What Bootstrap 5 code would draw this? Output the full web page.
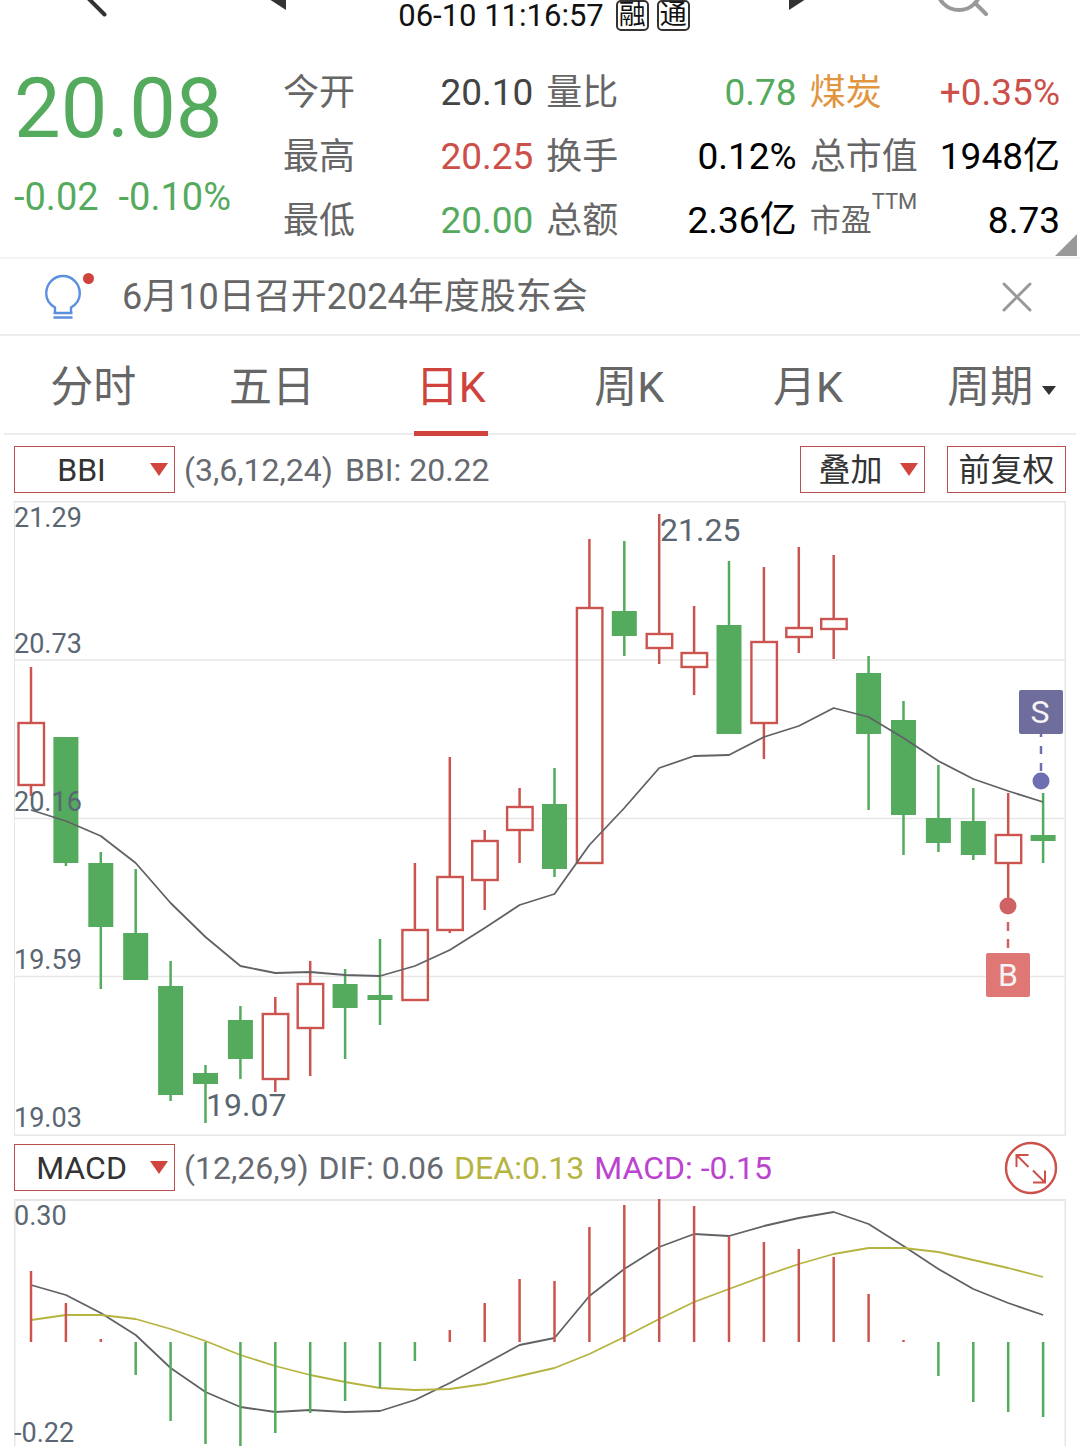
<!DOCTYPE html>
<html lang="zh-CN">
<head>
<meta charset="utf-8">
<meta name="viewport" content="width=device-width, initial-scale=1">
<title>日K</title>
<link href="https://cdn.jsdelivr.net/npm/bootstrap@5.3.0/dist/css/bootstrap.min.css" rel="stylesheet">
<style>
  :root { --up: #cc4f4a; --down: #54aa5d; --ink: #333; --label: #666; --rule: #ececec; --axis: #5a6672; }
  body { font-family: Roboto, "Noto Sans CJK SC", sans-serif; background: #fff; color: #000; overflow-x: hidden; }
  svg { display: block; }
  .c-up { color: var(--up); }
  .c-down { color: var(--down); }
  .c-ink { color: #444; }
  .c-label { color: var(--label); }
  .c-sector { color: #e2953f; }
  .c-dea { color: #b5b440; }
  .c-macd { color: #bb44cf; }
  .icon-btn { border: 0; background: none; padding: 0; }

  .topbar { height: 61px; }
  .topbar-side { flex: 1 1 0; height: 32px; }
  .topbar-start { padding: 0 104px 0 86px; }
  .topbar-end { padding: 0 92px 0 98px; }
  .stamp { font-size: 31px; line-height: 31px; color: #111; padding-left: 8px; }
  .flag { width: 33px; height: 31px; font-size: 27px; line-height: 27px; border: 2px solid #333; border-radius: 5px; text-align: center; }

  .quote { display: grid; grid-template-columns: 256px repeat(3, 1fr); column-gap: 13px; padding: 0 20px 4px 14px; border-bottom: 2px solid #f4f4f4; position: relative; }
  .price { font-size: 83px; line-height: 96px; }
  .delta { font-size: 38px; line-height: 80px; gap: 20px; }
  .stat-row { line-height: 64px; font-size: 37px; white-space: nowrap; }
  .stat-row dt { font-size: 36px; font-weight: 400; }
  .stat-row dd { margin: 0; }
  .stat-row .pe { font-size: 31px; }
  .pe sup { font-size: 22px; top: -22px; line-height: 0; vertical-align: baseline; }
  .corner { position: absolute; right: 3px; bottom: 1px; }

  .notice { height: 77px; padding: 0 48px 0 44px; border-bottom: 2px solid var(--rule); }
  .notice-text { font-size: 36px; color: var(--label); text-decoration: none; margin-left: 27px; }

  .period-tabs { height: 99px; margin: 0 4px; border-bottom: 2px solid var(--rule); }
  .period-tabs .nav-link { position: relative; width: 100%; height: 99px; padding: 0; border: 0; background: none; font-size: 43px; line-height: 102px; color: var(--label); white-space: nowrap; }
  .period-tabs .nav-link.active { color: #cf433c; }
  .period-tabs .nav-link.active::after { content: ""; position: absolute; left: 50%; bottom: -1px; width: 74px; height: 5px; margin-left: -37px; background: #cf433c; }
  .period-tabs .has-more { padding-left: 30px; }
  .has-more svg { display: inline-block; margin-left: 9px; vertical-align: middle; }

  .tools { height: 47px; font-size: 32px; line-height: 48px; margin: 8px 14px 0; white-space: nowrap; }
  .tools-main { margin-top: 11px; }
  .values { gap: 12px; margin-left: 9px; color: #666a70; }
  .values-tight { gap: 10px; }
  .boxed { height: 47px; border: 1px solid #b9504d; background: #fff; color: var(--ink); font-size: 32px; line-height: 42px; padding: 0; }
  .pick { position: relative; }
  .pick select { display: block; appearance: none; width: 100%; text-align: center; text-align-last: center; border-radius: 0; }
  .pick::after { content: ""; position: absolute; right: 7px; top: 17px; border: 9px solid transparent; border-top: 13px solid #d2453e; border-bottom: 0; pointer-events: none; }
  .pick-wide { width: 161px; }
  .pick-wide select { padding-right: 26px; }
  .pick-narrow { width: 125px; }
  .pick-narrow select { padding-right: 24px; }
  .adjust { width: 119px; margin-left: 22px; }
  .plot { margin: 8px 14px 0; }
  .plot svg { width: 100%; height: auto; }
  .plot text { font-family: Roboto, sans-serif; fill: var(--axis); font-size: 27px; }
  .plot .peak { font-size: 32px; }
  .plot .tag { font-size: 32px; fill: #f5f3f5; text-anchor: middle; }
</style>
<script src="https://cdn.jsdelivr.net/npm/bootstrap@5.3.0/dist/js/bootstrap.bundle.min.js"></script>
</head>
<body>

<header class="topbar d-flex align-items-start">
  <div class="topbar-side topbar-start d-flex justify-content-between">
    <button class="icon-btn align-self-start" aria-label="返回">
      <svg width="22" height="18" viewBox="0 0 22 18"><path d="M3-1 L18.500 14.500" stroke="#333" stroke-width="4" stroke-linecap="round"/></svg>
    </button>
    <button class="icon-btn align-self-start" aria-label="上一只">
      <svg width="22" height="12" viewBox="0 0 22 12"><path d="M5-1 L22-1 L22 10Z" fill="#333"/></svg>
    </button>
  </div>
  <div class="stamp d-flex">
    <span class="me-2 pe-1">06-10 11:16:57</span>
    <span class="flag me-2">融</span><span class="flag">通</span>
  </div>
  <div class="topbar-side topbar-end d-flex justify-content-between">
    <button class="icon-btn align-self-start" aria-label="下一只">
      <svg width="18" height="12" viewBox="0 0 18 12"><path d="M1-1 L18-1 L1 10Z" fill="#333"/></svg>
    </button>
    <button class="icon-btn align-self-start" aria-label="搜索">
      <svg width="50" height="18" viewBox="0 0 50 18" fill="none" stroke="#999" stroke-width="4" stroke-linecap="round"><circle cx="21" cy="-12" r="22"/><path d="M37 3 L48 14"/></svg>
    </button>
  </div>
</header>

<section class="quote">
  <div>
    <div class="price c-down">20.08</div>
    <div class="delta c-down d-flex"><span>-0.02</span><span>-0.10%</span></div>
  </div>
  <dl class="m-0">
    <div class="stat-row d-flex justify-content-between"><dt class="c-label">今开</dt><dd class="c-ink">20.10</dd></div>
    <div class="stat-row d-flex justify-content-between"><dt class="c-label">最高</dt><dd class="c-up">20.25</dd></div>
    <div class="stat-row d-flex justify-content-between"><dt class="c-label">最低</dt><dd class="c-down">20.00</dd></div>
  </dl>
  <dl class="m-0">
    <div class="stat-row d-flex justify-content-between"><dt class="c-label">量比</dt><dd class="c-down">0.78</dd></div>
    <div class="stat-row d-flex justify-content-between"><dt class="c-label">换手</dt><dd>0.12%</dd></div>
    <div class="stat-row d-flex justify-content-between"><dt class="c-label">总额</dt><dd>2.36亿</dd></div>
  </dl>
  <dl class="m-0">
    <div class="stat-row d-flex justify-content-between"><dt class="c-sector">煤炭</dt><dd class="c-up">+0.35%</dd></div>
    <div class="stat-row d-flex justify-content-between"><dt class="c-label">总市值</dt><dd>1948亿</dd></div>
    <div class="stat-row d-flex justify-content-between"><dt class="c-label pe">市盈<sup>TTM</sup></dt><dd>8.73</dd></div>
  </dl>
  <svg class="corner" width="22" height="22" viewBox="0 0 22 22"><path d="M22 0V22H0Z" fill="#999"/></svg>
</section>

<section class="notice d-flex align-items-center">
  <svg width="51" height="48" viewBox="0 0 51 48" fill="none" stroke="#5b8fe0" stroke-width="2.400">
    <path d="M11 39 V34.500 C5 31 2.200 26.500 2.200 20.500 A16.800 17.500 0 0 1 35.800 20.500 C35.800 26.500 33 31 27 34.500 V39"/>
    <path d="M9.500 40 H28.500 M9.500 44.500 H28.500"/>
    <circle cx="44.500" cy="5.500" r="5.500" fill="#cf433c" stroke="none"/>
  </svg>
  <a href="#" class="notice-text">6月10日召开2024年度股东会</a>
  <button class="icon-btn ms-auto" aria-label="关闭">
    <svg width="30" height="30" viewBox="0 0 30 30" stroke="#999" stroke-width="3" stroke-linecap="round"><path d="M2 2 L28 28 M28 2 L2 28"/></svg>
  </button>
</section>

<ul class="nav nav-justified period-tabs flex-nowrap">
  <li class="nav-item"><button class="nav-link">分时</button></li>
  <li class="nav-item"><button class="nav-link">五日</button></li>
  <li class="nav-item"><button class="nav-link active" aria-current="true">日K</button></li>
  <li class="nav-item"><button class="nav-link">周K</button></li>
  <li class="nav-item"><button class="nav-link">月K</button></li>
  <li class="nav-item"><button class="nav-link has-more">周期<svg width="14" height="9" viewBox="0 0 14 9"><path d="M0 0H14L7 9Z" fill="#333"/></svg></button></li>
</ul>

<div class="tools tools-main d-flex">
  <div class="pick pick-wide"><select class="boxed" aria-label="主图指标"><option>BBI</option><option>MA</option></select></div>
  <div class="values d-flex"><span>(3,6,12,24)</span><span>BBI: 20.22</span></div>
  <div class="pick pick-narrow ms-auto"><select class="boxed" aria-label="叠加"><option>叠加</option></select></div>
  <button class="boxed adjust">前复权</button>
</div>
<div class="plot"><svg id="kline" viewBox="14 501 1052 635" role="img" aria-label="日K线"></svg></div>

<div class="tools d-flex">
  <div class="pick pick-wide"><select class="boxed" aria-label="副图指标"><option>MACD</option><option>KDJ</option></select></div>
  <div class="values values-tight d-flex"><span>(12,26,9)</span><span>DIF: 0.06</span><span class="c-dea">DEA:0.13</span><span class="c-macd">MACD: -0.15</span></div>
  <button class="icon-btn ms-auto me-2 d-flex align-items-center" aria-label="全屏">
    <svg width="54" height="54" viewBox="0 0 54 54" fill="none" stroke="#cc4f4a" stroke-width="2.400">
      <circle cx="27" cy="27" r="25"/>
      <path stroke-width="2" d="M24.500 26 L13 14.500 M12.500 26 V14 H24.500 M29 29.500 L40.500 41 M41 29.500 V41.500 H29"/>
    </svg>
  </button>
</div>
<div class="plot"><svg id="macd" viewBox="14 1199 1052 247" role="img" aria-label="MACD"></svg></div>

<script>
  const UP = '#cc544f', DOWN = '#54aa5d', LINE = '#606266', RULE = '#e6e6e6';
  const X0 = 31, STEP = 34.9, x = i => X0 + i * STEP;
  const line = (x1, y1, x2, y2, c, w, extra = '') => `<line x1="${x1}" y1="${y1}" x2="${x2}" y2="${y2}" stroke="${c}" stroke-width="${w}" ${extra}/>`;
  const curve = (ys, c) => `<polyline fill="none" stroke="${c}" stroke-width="1.800" stroke-linejoin="round" points="${ys.map((y, i) => x(i) + ',' + y).join(' ')}"/>`;
  const text = (tx, ty, s, cls = '') => `<text x="${tx}" y="${ty}" class="${cls}">${s}</text>`;

  // colour, high, body top, body bottom, low
  const candles = [
    ['r',667,723,785,796],['g',737,737,863,866],['g',852,863,927,989],['g',869,933,980,980],['g',961,986,1095,1101],
    ['g',1065,1073,1084,1123],['g',1006,1020,1059,1079],['r',997,1014,1079,1092],['r',961,984,1028,1076],['g',969,984,1008,1059],
    ['g',939,995,1000,1025],['r',863,930,1000,1000],['r',757,877,930,933],['r',830,841,880,910],['r',788,807,830,863],
    ['g',768,804,869,877],['r',539,608,863,863],['g',541,611,636,656],['r',514,634,648,664],['r',606,653,667,695],
    ['g',561,625,734,734],['r',567,642,723,759],['r',547,628,637,653],['r',555,619,629,659],['g',656,673,734,810],
    ['g',701,720,815,855],['g',765,818,843,852],['g',788,821,855,860],['r',793,835,863,898],['g',793,835,841,863]
  ];
  const bbi = [810,821,836,863,903,937,966,973,972,975,976,966,950,928,905,894,845,808,768,756,755,737,726,708,717,738,761,779,791,802];

  let k = '';
  [660, 818.5, 976.5].forEach(y => k += line(14, y, 1066, y, RULE, 1.500));
  k += `<rect x="14" y="501.500" width="1051.500" height="634" fill="none" stroke="${RULE}" stroke-width="2"/>`;
  candles.forEach(([t, h, a, b, l], i) => {
    const c = t === 'r' ? UP : DOWN, cx = x(i);
    if (t === 'r') {
      k += line(cx, h, cx, a, c, 2.500) + line(cx, b, cx, l, c, 2.500);
      k += `<rect x="${cx - 12.5}" y="${a}" width="25.500" height="${b - a}" fill="none" stroke="${c}" stroke-width="2.400"/>`;
    } else {
      k += line(cx, h, cx, l, c, 2.500) + `<rect x="${cx - 12.5}" y="${a}" width="25" height="${b - a}" fill="${c}"/>`;
    }
  });
  k += curve(bbi, LINE);
  [['21.29',527],['20.73',653],['20.16',811],['19.59',969],['19.03',1127]].forEach(([s, y]) => k += text(14, y, s));
  k += text(660, 541, '21.25', 'peak') + text(206, 1116, '19.07', 'peak');
  k += line(1041, 734, 1041, 772, '#6d6fb0', 2.500, 'stroke-dasharray="8 9" stroke-dashoffset="5"');
  k += '<circle cx="1041" cy="781" r="8.500" fill="#6d6fb0"/><rect x="1019" y="690" width="44" height="44" rx="2" fill="#6f6d9c"/>' + text(1040, 723, 'S', 'tag');
  k += line(1008, 922, 1008, 948, '#cf6264', 2.500, 'stroke-dasharray="9 8"');
  k += '<circle cx="1008" cy="906" r="8.500" fill="#cf6264"/><rect x="986" y="953" width="44" height="44" rx="2" fill="#df7874"/>' + text(1008, 986, 'B', 'tag');
  document.getElementById('kline').innerHTML = k;

  const ZERO = 1342;
  const bars = [1271,1303,1339,1375,1421,1444,1450,1433,1413,1401,1388,1361,1330,1303,1279,1281,1227,1205,1199,1206,1236,1242,1249,1257,1294,1340,1376,1402,1412,1417];
  const dif = [1285,1295,1313,1335,1368,1392,1407,1412,1410,1412,1411,1400,1383,1364,1345,1338,1296,1269,1247,1234,1236,1226,1218,1212,1224,1246,1269,1289,1303,1315];
  const dea = [1320,1315,1315,1319,1329,1341,1355,1366,1375,1382,1388,1390,1389,1384,1376,1368,1354,1337,1319,1302,1289,1276,1264,1254,1248,1248,1252,1260,1268,1277];
  let m = `<path d="M14.500 1446 V1200 H1065.500 V1446" fill="none" stroke="${RULE}" stroke-width="2"/>`;
  m += curve(dif, LINE) + curve(dea, '#b5b440');
  bars.forEach((y, i) => m += line(x(i), ZERO, x(i), y, y < ZERO ? UP : DOWN, 2.500));
  m += text(14, 1225, '0.30') + text(14, 1442, '-0.22');
  document.getElementById('macd').innerHTML = m;
</script>
</body>
</html>
